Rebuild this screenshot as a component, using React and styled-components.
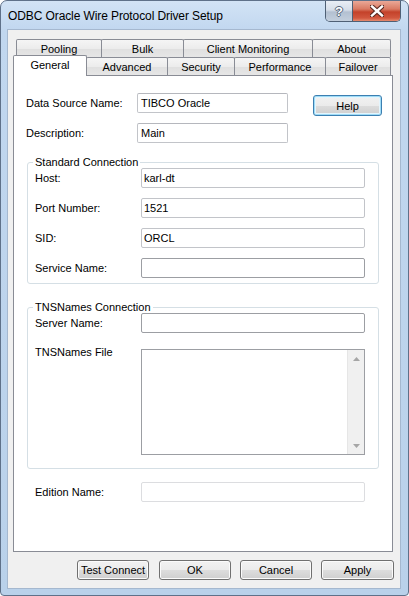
import styled, { createGlobalStyle } from "styled-components";

const abasFundo = [
    { nome: "Pooling", largura: 86 },
    { nome: "Bulk", largura: 83 },
    { nome: "Client Monitoring", largura: 130 },
    { nome: "About", largura: 79 },
];

const abasFrente = [
    { nome: "General", largura: 74, ativa: true },
    { nome: "Advanced", largura: 82 },
    { nome: "Security", largura: 68 },
    { nome: "Performance", largura: 92 },
    { nome: "Failover", largura: 66 },
];

const conexaoPadrao = [
    { rotulo: "Host:", valor: "karl-dt" },
    { rotulo: "Port Number:", valor: "1521" },
    { rotulo: "SID:", valor: "ORCL" },
    { rotulo: "Service Name:", valor: "", escuro: true },
];

function Seta({ baixo }) {
    return (
        <svg width="7" height="4" viewBox="0 0 7 4">
            <path d={baixo ? "M0 0 H7 L3.5 4 Z" : "M3.5 0 L7 4 H0 Z"} fill="#a6a6a6" />
        </svg>
    );
}

function App() {
    return (
        <>
            <GlobalStyle />
            <Janela>
                <BarraTitulo>
                    <Titulo>ODBC Oracle Wire Protocol Driver Setup</Titulo>
                    <BotoesJanela>
                        <BotaoAjudaJanela>?</BotaoAjudaJanela>
                        <BotaoFechar>
                            <svg width="14" height="12" viewBox="0 0 14 12">
                                <path d="M2 1.5 L12 10.5 M12 1.5 L2 10.5" stroke="#5b2a22" strokeWidth="4.6" strokeLinecap="square" />
                                <path d="M2 1.5 L12 10.5 M12 1.5 L2 10.5" stroke="#ffffff" strokeWidth="2.4" strokeLinecap="square" />
                            </svg>
                        </BotaoFechar>
                    </BotoesJanela>
                </BarraTitulo>

                <Cliente>
                    <LinhaAbas $recuo={8}>
                        {abasFundo.map(a => (
                            <Aba key={a.nome} $largura={a.largura}>{a.nome}</Aba>
                        ))}
                    </LinhaAbas>
                    <LinhaAbas $recuo={5}>
                        {abasFrente.map(a => a.ativa ? (
                            <AbaAtiva key={a.nome} $largura={a.largura}>{a.nome}</AbaAtiva>
                        ) : (
                            <Aba key={a.nome} $largura={a.largura}>{a.nome}</Aba>
                        ))}
                    </LinhaAbas>

                    <Painel>
                        <LinhaTopo>
                            <RotuloTopo>Data Source Name:</RotuloTopo>
                            <CampoTopo>TIBCO Oracle</CampoTopo>
                            <BotaoAjuda>Help</BotaoAjuda>
                        </LinhaTopo>
                        <LinhaTopo $espaco={10}>
                            <RotuloTopo>Description:</RotuloTopo>
                            <CampoTopo>Main</CampoTopo>
                        </LinhaTopo>

                        <Grupo $espaco={13}>
                            <Legenda>Standard Connection</Legenda>
                            <Linhas>
                                {conexaoPadrao.map(c => (
                                    <Linha key={c.rotulo}>
                                        <Rotulo>{c.rotulo}</Rotulo>
                                        <Campo $escuro={c.escuro}>{c.valor}</Campo>
                                    </Linha>
                                ))}
                            </Linhas>
                        </Grupo>

                        <Grupo $espaco={17} $fundo={13}>
                            <Legenda>TNSNames Connection</Legenda>
                            <Linhas>
                                <Linha>
                                    <Rotulo>Server Name:</Rotulo>
                                    <Campo $escuro />
                                </Linha>
                                <Linha $alto>
                                    <Rotulo $topo>TNSNames File</Rotulo>
                                    <AreaTexto>
                                        <BarraRolagem>
                                            <Seta />
                                            <Seta baixo />
                                        </BarraRolagem>
                                    </AreaTexto>
                                </Linha>
                            </Linhas>
                        </Grupo>

                        <LinhaEdicao>
                            <Rotulo>Edition Name:</Rotulo>
                            <Campo $desativado />
                        </LinhaEdicao>
                    </Painel>

                    <Rodape>
                        <Botao $largura={72}>Test Connect</Botao>
                        <Botao $largura={72} $espaco={10}>OK</Botao>
                        <Botao $largura={72} $espaco={9}>Cancel</Botao>
                        <Botao $largura={73} $espaco={9}>Apply</Botao>
                    </Rodape>
                </Cliente>
            </Janela>
        </>
    );
}

export default App;

const GlobalStyle = createGlobalStyle`
    html, body {
        margin: 0;
        padding: 0;
        background: #ffffff;
    }
    body {
        font-family: "Liberation Sans", Arial, sans-serif;
        font-size: 11px;
        color: #000000;
    }
`

const Janela = styled.div`
    width: 409px;
    height: 596px;
    box-sizing: border-box;
    display: flex;
    flex-direction: column;
    padding: 0 7px 6px 6px;
    border: 1px solid #5f7189;
    border-radius: 7px 7px 4px 4px;
    background: linear-gradient(180deg, #d2e3f5 0px, #c1d7ef 30px, #b9d1ea 100%);
`

const BarraTitulo = styled.div`
    height: 28px;
    display: flex;
    justify-content: space-between;
    align-items: flex-start;
`

const Titulo = styled.span`
    font-family: "Liberation Sans", Arial, sans-serif;
    font-size: 12px;
    line-height: 14px;
    letter-spacing: -0.1px;
    margin: 8px 0 0 1px;
`

const BotoesJanela = styled.div`
    display: flex;
    height: 20px;
    border: 1px solid #4f6075;
    border-top: none;
    border-radius: 0 0 5px 5px;
    overflow: hidden;
`

const BotaoAjudaJanela = styled.div`
    width: 26px;
    display: flex;
    align-items: center;
    justify-content: center;
    border-right: 1px solid #4f6075;
    background: linear-gradient(180deg, #e9eef5 0%, #d6dee9 45%, #b3c0d1 55%, #c3cfdd 100%);
    color: #ffffff;
    font-family: "Liberation Sans", sans-serif;
    font-weight: bold;
    font-size: 13px;
    text-shadow: -1px 0 #55657a, 1px 0 #55657a, 0 -1px #55657a, 0 1px #55657a;
`

const BotaoFechar = styled.div`
    width: 47px;
    display: flex;
    align-items: center;
    justify-content: center;
    background: linear-gradient(180deg, #eaa897 0%, #d97b64 40%, #c4422a 55%, #d1573e 85%, #e58a6e 100%);
`

const Cliente = styled.div`
    flex: 1;
    display: flex;
    flex-direction: column;
    background: #f0f0f0;
    border: 1px solid #a5b8cf;
`

const LinhaAbas = styled.div`
    display: flex;
    height: 18px;
    margin-left: ${props => props.$recuo}px;
    &:first-child {
        margin-top: 9px;
    }
`

const Aba = styled.div`
    box-sizing: border-box;
    width: ${props => props.$largura}px;
    display: flex;
    align-items: center;
    justify-content: center;
    border: 1px solid #898c95;
    border-bottom: none;
    border-radius: 2px 2px 0 0;
    background: linear-gradient(180deg, #f5f5f5 0%, #ececec 50%, #e0e0e0 55%, #e6e6e6 100%);
    & + & {
        margin-left: -1px;
    }
`

const AbaAtiva = styled(Aba)`
    margin-top: -2px;
    margin-bottom: -1px;
    padding-bottom: 3px;
    background: #ffffff;
    position: relative;
    z-index: 2;
`

const Painel = styled.div`
    box-sizing: border-box;
    width: 380px;
    height: 477px;
    margin-left: 5px;
    padding: 17px 0 0 12px;
    display: flex;
    flex-direction: column;
    background: #ffffff;
    border: 1px solid #898c95;
`

const LinhaTopo = styled.div`
    display: flex;
    align-items: flex-start;
    height: 20px;
    margin-top: ${props => props.$espaco || 0}px;
`

const RotuloTopo = styled.span`
    width: 111px;
    line-height: 20px;
`

const CampoTopo = styled.div`
    box-sizing: border-box;
    width: 151px;
    height: 20px;
    padding: 0 3px;
    line-height: 18px;
    border: 1px solid #c2c4c9;
    border-top-color: #b5b7bd;
    border-radius: 2px;
`

const Grupo = styled.fieldset`
    box-sizing: border-box;
    width: 352px;
    margin: ${props => props.$espaco}px 0 0 1px;
    padding: 0 13px ${props => props.$fundo || 5}px 7px;
    border: 1px solid #d5dfe5;
    border-radius: 3px;
    min-inline-size: 0;
`

const Legenda = styled.legend`
    margin-left: -2px;
    padding: 0 2px;
    line-height: 13px;
    font-size: 11px;
`

const Linhas = styled.div`
    display: flex;
    flex-direction: column;
    gap: 10px;
    margin-top: -1px;
`

const Linha = styled.div`
    display: flex;
    align-items: ${props => props.$alto ? "flex-start" : "center"};
    margin-top: ${props => props.$alto ? 6 : 0}px;
`

const Rotulo = styled.span`
    width: 106px;
    line-height: 13px;
    margin-top: ${props => props.$topo ? -3 : 0}px;
`

const Campo = styled.div`
    box-sizing: border-box;
    width: 224px;
    height: 20px;
    padding: 0 2px;
    line-height: 18px;
    border: 1px solid ${props => props.$desativado ? "#dcdde0" : props.$escuro ? "#9c9ea3" : "#c2c4c9"};
    border-radius: 2px;
    background: #ffffff;
`

const AreaTexto = styled.div`
    box-sizing: border-box;
    width: 224px;
    height: 106px;
    display: flex;
    justify-content: flex-end;
    border: 1px solid #9c9ea3;
    background: #ffffff;
`

const BarraRolagem = styled.div`
    box-sizing: border-box;
    width: 17px;
    padding: 7px 0 6px 0;
    display: flex;
    flex-direction: column;
    justify-content: space-between;
    align-items: center;
    background: #f0f0f0;
    border-left: 1px solid #e6e6e6;
`

const LinhaEdicao = styled.div`
    display: flex;
    align-items: center;
    margin: 13px 0 0 9px;
`

const Rodape = styled.div`
    display: flex;
    justify-content: flex-end;
    margin-top: 8px;
    padding-right: 6px;
`

const Botao = styled.button`
    box-sizing: border-box;
    width: ${props => props.$largura}px;
    height: 20px;
    margin-left: ${props => props.$espaco || 0}px;
    padding: 0;
    font-family: "Liberation Sans", Arial, sans-serif;
    font-size: 11px;
    color: #000000;
    border: 1px solid #707070;
    border-radius: 3px;
    background: linear-gradient(180deg, #f2f2f2 0%, #ebebeb 50%, #dddddd 51%, #cfcfcf 100%);
    box-shadow: inset 0 0 0 1px #fbfbfb;
`

const BotaoAjuda = styled(Botao)`
    width: 69px;
    height: 21px;
    margin: 2px 0 0 25px;
    border-color: #3c7fb1;
    box-shadow: inset 0 0 0 1px #9fdcf7, inset 0 0 0 2px #e4f5fd;
`
